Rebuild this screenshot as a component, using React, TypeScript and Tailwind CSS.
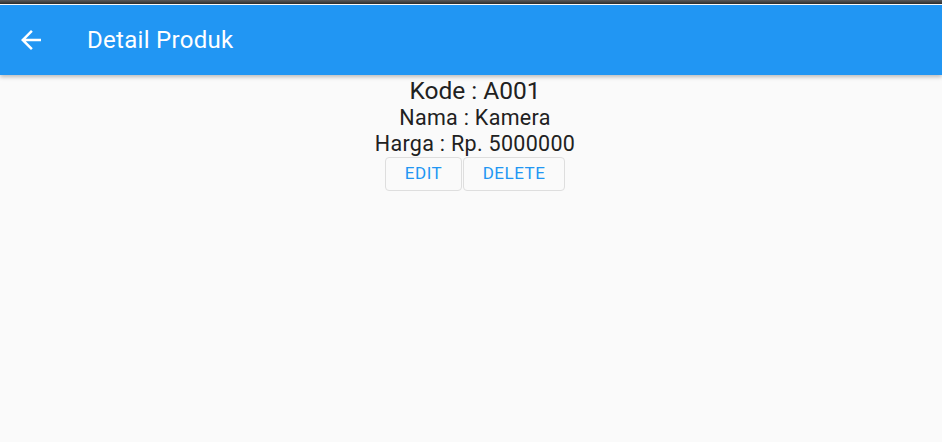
const ArrowBack = () => (
  <svg width="30" height="30" viewBox="0 0 24 24" fill="white">
    <path d="M20 11H7.83l5.59-5.59L12 4l-8 8 8 8 1.41-1.41L7.83 13H20v-2z" />
  </svg>
);

export default function App() {
  return (
    <div
      className="w-[942px] h-[442px] bg-[#fafafa] flex flex-col overflow-hidden"
      style={{ fontFamily: "Roboto, 'Noto Sans', sans-serif" }}
    >
      <div className="h-[4px] bg-gradient-to-b from-[#5a5a5a] to-[#2e2e2e]" />
      <div className="h-[1px] bg-white" />
      <header className="h-[70px] bg-[#2196f3] flex items-center shadow-[0_2px_4px_rgba(0,0,0,0.25)] relative z-10">
        <div className="w-[70px] pl-[16px] flex items-center">
          <ArrowBack />
        </div>
        <h1 className="ml-[17px] text-white text-[24px] font-normal tracking-[0.3px]">
          Detail Produk
        </h1>
      </header>
      <main className="flex flex-col items-center pl-[8px] text-[#212121]">
        <div className="text-[24.5px] leading-[28px] mt-[2px]">Kode : A001</div>
        <div className="text-[21.5px] leading-[26px] tracking-[0.3px]">Nama : Kamera</div>
        <div className="text-[21.5px] leading-[26px] tracking-[0.3px]">Harga : Rp. 5000000</div>
        <div className="flex">
          <button className="h-[34px] w-[77px] rounded-[4px] border border-[#dedede] text-[#2196f3] text-[17px] font-normal tracking-[0.5px]">
            EDIT
          </button>
          <button className="h-[34px] w-[102px] ml-[1px] rounded-[4px] border border-[#dedede] text-[#2196f3] text-[17px] font-normal tracking-[0.5px]">
            DELETE
          </button>
        </div>
      </main>
    </div>
  );
}
